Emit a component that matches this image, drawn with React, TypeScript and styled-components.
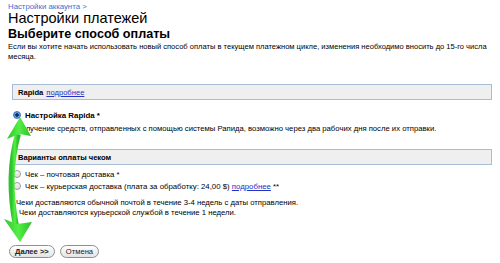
import styled, { createGlobalStyle } from "styled-components";

const GlobalStyle = createGlobalStyle`
  html, body {
    margin: 0;
    padding: 0;
    background: #fff;
  }
  body {
    font-family: "Liberation Sans", Arial, sans-serif;
    color: #000;
  }
`;

const Page = styled.div`
  position: relative;
  width: 500px;
  height: 263px;
  padding: 3px 8px 0 8px;
  box-sizing: border-box;
  overflow: hidden;
`;

const Breadcrumb = styled.a`
  display: block;
  font-size: 7.8px;
  color: #3a6fd0;
  text-decoration: none;
  line-height: 8px;
`;

const Title = styled.h1`
  margin: -1px 0 0 0;
  font-size: 14.5px;
  font-weight: normal;
  line-height: 17px;
`;

const Subtitle = styled.h2`
  margin: 0;
  font-size: 12.6px;
  font-weight: bold;
  line-height: 14px;
`;

const Intro = styled.p`
  margin: 1px 0 0 0;
  font-size: 7.55px;
  line-height: 10px;
`;

const Section = styled.div<{ $top: number }>`
  margin: ${(p) => p.$top}px 0 0 4px;
`;

const SectionBar = styled.div`
  height: 14px;
  border: 1px solid #a9bcd6;
  background: #efefef;
  display: flex;
  align-items: center;
  padding-left: 5px;
  font-size: 7.6px;
  font-weight: bold;
  gap: 3px;
`;

const Link = styled.a`
  color: #2233cc;
  text-decoration: underline;
  font-weight: normal;
`;

const OptionList = styled.div<{ $top: number }>`
  display: flex;
  flex-direction: column;
  margin-top: ${(p) => p.$top}px;
`;

const Option = styled.label<{ $bold?: boolean }>`
  display: flex;
  align-items: center;
  gap: 4px;
  height: 12px;
  font-size: ${(p) => (p.$bold ? "7.9px" : "7.8px")};
  font-weight: ${(p) => (p.$bold ? "bold" : "normal")};
`;

const Radio = styled.span<{ $checked?: boolean }>`
  width: 8px;
  height: 8px;
  border-radius: 50%;
  box-sizing: border-box;
  border: 1px solid ${(p) => (p.$checked ? "#3b70b8" : "#9a9a9a")};
  background: ${(p) =>
    p.$checked
      ? "radial-gradient(circle, #0a2f6a 0 1.5px, #6fa8e6 2px, #3c7ac8 100%)"
      : "linear-gradient(#f6f6f6, #dcdcdc)"};
  margin-left: 1px;
`;

const Note = styled.div<{ $top: number; $indent?: number }>`
  font-size: 7.7px;
  line-height: 10px;
  margin-top: ${(p) => p.$top}px;
  padding-left: ${(p) => p.$indent ?? 4}px;
`;

const Buttons = styled.div`
  display: flex;
  gap: 5px;
  margin-top: 27px;
  margin-left: 1px;
`;

const Button = styled.button<{ $bold?: boolean }>`
  height: 13px;
  padding: 0 5px;
  border: 1px solid #8e8e8e;
  border-radius: 7px;
  background: linear-gradient(#ffffff, #e4e4e4);
  font-family: "Liberation Sans", Arial, sans-serif;
  font-size: 7.6px;
  font-weight: ${(p) => (p.$bold ? "bold" : "normal")};
  line-height: 11px;
  color: #222;
`;

const ArrowLayer = styled.svg`
  position: absolute;
  left: 0;
  top: 0;
  pointer-events: none;
`;

const Arrow = () => (
  <ArrowLayer width="60" height="263" viewBox="0 0 60 263">
    <defs>
      <linearGradient id="g" x1="0" x2="1">
        <stop offset="0" stopColor="#2ec42e" />
        <stop offset="0.5" stopColor="#55ee45" />
        <stop offset="1" stopColor="#2bbf2b" />
      </linearGradient>
    </defs>
    <path
      d="M18 134 C 12 155, 8 185, 16 226"
      stroke="url(#g)"
      strokeWidth="6"
      fill="none"
    />
    <path d="M20 117 L31 136 L19 134 L7 139 Z" fill="url(#g)" />
    <path d="M20 242 L32 222 L17 224 L4 219 Z" fill="url(#g)" />
  </ArrowLayer>
);

export default function App() {
  return (
    <>
      <GlobalStyle />
      <Page>
        <Breadcrumb href="#">Настройки аккаунта &gt;</Breadcrumb>
        <Title>Настройки платежей</Title>
        <Subtitle>Выберите способ оплаты</Subtitle>
        <Intro>
          Если вы хотите начать использовать новый способ оплаты в текущем
          платежном цикле, изменения необходимо вносить до 15-го числа месяца.
        </Intro>

        <Section $top={22}>
          <SectionBar>
            Rapida <Link href="#">подробнее</Link>
          </SectionBar>
          <OptionList $top={9}>
            <Option $bold>
              <Radio $checked />
              Настройка Rapida *
            </Option>
          </OptionList>
          <Note $top={3}>
            Получение средств, отправленных с помощью системы Рапида, возможно
            через два рабочих дня после их отправки.
          </Note>
        </Section>

        <Section $top={15}>
          <SectionBar>Варианты оплаты чеком</SectionBar>
          <OptionList $top={3}>
            <Option>
              <Radio />
              Чек – почтовая доставка *
            </Option>
            <Option>
              <Radio />
              <span>
                Чек – курьерская доставка (плата за обработку: 24,00 $){" "}
                <Link href="#">подробнее</Link> **
              </span>
            </Option>
          </OptionList>
          <Note $top={6}>
            Чеки доставляются обычной почтой в течение 3-4 недель с даты
            отправления.
          </Note>
          <Note $top={0} $indent={7}>
            Чеки доставляются курьерской службой в течение 1 недели.
          </Note>
        </Section>

        <Buttons>
          <Button $bold>Далее &gt;&gt;</Button>
          <Button>Отмена</Button>
        </Buttons>
        <Arrow />
      </Page>
    </>
  );
}
